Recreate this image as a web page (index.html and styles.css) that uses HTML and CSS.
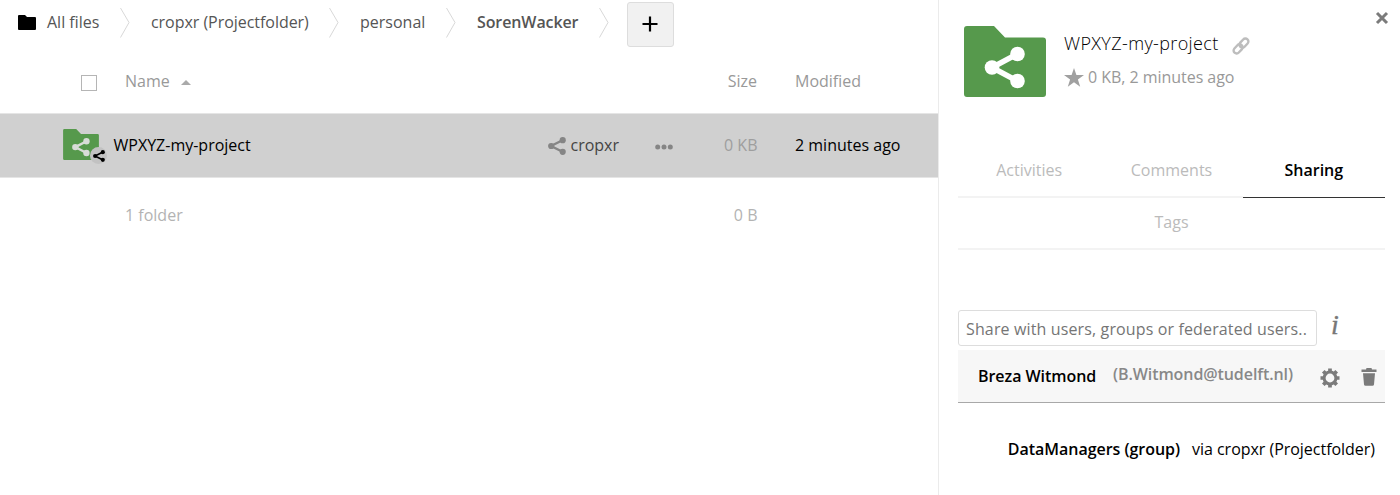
FILE: index.html
```html
<!DOCTYPE html>
<html lang="en">
<head>
<meta charset="utf-8">
<title>Files</title>
<link rel="stylesheet" href="styles.css">
</head>
<body>
<svg class="defs" width="0" height="0">
  <symbol id="share" viewBox="0 0 18 18"><path d="M15 3 3 9l12 6" fill="none" stroke="currentColor" stroke-width="2.400"/><circle cx="14.700" cy="3.200" r="3.100" fill="currentColor"/><circle cx="3.200" cy="9" r="3.100" fill="currentColor"/><circle cx="14.700" cy="14.800" r="3.100" fill="currentColor"/></symbol>
  <symbol id="folder" viewBox="0 0 82 71"><path d="M3 0h27l11 11.500h38q3 0 3 3V68q0 3-3 3H3q-3 0-3-3V3q0-3 3-3z" fill="#56994c"/><path d="M53.500 28 28 41.500 53.500 55" fill="none" stroke="currentColor" stroke-width="5.500"/><circle cx="53.500" cy="28" r="7.300" fill="currentColor"/><circle cx="28" cy="41.500" r="7.300" fill="currentColor"/><circle cx="53.500" cy="55" r="7.300" fill="currentColor"/></symbol>
  <symbol id="sep" viewBox="0 0 10 32"><path d="M.5 1 9 15.500.5 30.500" fill="none" stroke="#d8d8d8"/></symbol>
</svg>
<div class="app">
  <main class="files">
    <nav class="crumbs">
      <svg class="home" width="18" height="16"><path d="M0 1q0-1 1-1h6l2 2h8q1 0 1 1v11q0 1-1 1H1q-1 0-1-1z"/></svg>
      <span class="crumb c1">All files</span><svg class="sep"><use href="#sep"/></svg>
      <span class="crumb c2">cropxr (Projectfolder)</span><svg class="sep"><use href="#sep"/></svg>
      <span class="crumb c3">personal</span><svg class="sep"><use href="#sep"/></svg>
      <span class="crumb c4">SorenWacker</span><svg class="sep"><use href="#sep"/></svg>
      <button class="add" aria-label="New"><svg width="16" height="16"><path d="M8 .5v15M.5 8h15" stroke="#000" stroke-width="2.200"/></svg></button>
    </nav>
    <div class="row head">
      <span class="check"></span>
      <span class="label">Name<svg class="sort" width="10" height="5"><path d="M0 5 5 0l5 5z" fill="#aaa"/></svg></span>
      <span class="size">Size</span><span class="date">Modified</span>
    </div>
    <div class="row item">
      <span class="thumb"><svg class="thumb-folder" width="36" height="31"><use href="#folder"/></svg><span class="badge"><svg width="12" height="12"><use href="#share"/></svg></span></span>
      <span class="name">WPXYZ-my-project</span>
      <span class="owner"><svg width="18" height="18"><use href="#share"/></svg>cropxr</span>
      <svg class="more" width="18" height="6"><circle cx="2.700" cy="3" r="2.500"/><circle cx="9" cy="3" r="2.500"/><circle cx="15.300" cy="3" r="2.500"/></svg>
      <span class="size">0 KB</span><span class="date">2 minutes ago</span>
    </div>
    <div class="row summary"><span class="label">1 folder</span><span class="size">0 B</span><span class="date"></span></div>
  </main>
  <aside class="details">
    <button class="close" aria-label="Close"><svg width="14" height="14"><path d="m2 2 10 10M12 2 2 12" stroke="#7b7b7b" stroke-width="3"/></svg></button>
    <header class="info">
      <svg class="big" width="82" height="71"><use href="#folder"/></svg>
      <div>
        <div class="title"><span>WPXYZ-my-project</span><svg width="18" height="18" viewBox="0 0 18 18" fill="none" stroke="#bdbdbd" stroke-width="2.400"><rect x="-5.200" y="-3" width="10.400" height="6" rx="3" transform="translate(11.900 6.100) rotate(-47)"/><rect x="-5.200" y="-3" width="10.400" height="6" rx="3" transform="translate(6.100 11.900) rotate(-47)"/></svg></div>
        <div class="meta"><svg width="20" height="19" viewBox="0 0 20 19"><path d="m10 0 2.400 7H20l-6.100 4.400 2.300 7.400L10 14.300l-6.200 4.500 2.300-7.400L0 7h7.600z" fill="#a0a0a0"/></svg><span>0 KB, 2 minutes ago</span></div>
      </div>
    </header>
    <nav class="tabs"><span class="tab">Activities</span><span class="tab">Comments</span><span class="tab on">Sharing</span><span class="tab wide">Tags</span></nav>
    <div class="search"><span class="field">Share with users, groups or federated users..</span><span class="hint">i</span></div>
    <div class="person">
      <b class="who">Breza Witmond</b><b class="mail">(B.Witmond@tudelft.nl)</b>
      <svg class="gear" width="20" height="20" viewBox="-10 -10 20 20"><circle r="5.900" fill="none" stroke="#7b7b7b" stroke-width="3"/><g stroke="#7b7b7b" stroke-width="3.700"><path d="M0-9.500v3M0 9.500v-3M-9.500 0h3M9.500 0h-3"/><path d="M0-9.500v3M0 9.500v-3M-9.500 0h3M9.500 0h-3" transform="rotate(45)"/></g></svg>
      <svg class="bin" width="16" height="18" viewBox="0 0 16 18" fill="#7b7b7b"><path d="M.5 1.500H5L5.500 0h5l.5 1.500h4.500V4H.5zM2 5.200h12l-1 11.300q-.2 1.300-1.500 1.300h-7Q3.200 17.800 3 16.500z"/></svg>
    </div>
    <div class="group"><b>DataManagers (group)</b><span>via cropxr (Projectfolder)</span></div>
  </aside>
</div>
</body>
</html>
```
FILE: styles.css
```css
* { box-sizing: border-box; }
body { margin: 0; background: #fff; font: 16px/24px "Open Sans", sans-serif; color: #000; overflow: hidden; }
.defs { display: none; }
svg { display: block; flex: none; }
b { font-weight: 600; }
button { padding: 0; font: inherit; }
.app { display: flex; height: 495px; }
.files { width: 938px; flex: none; }
.crumbs { display: flex; height: 49px; padding-left: 18px; color: #555; white-space: nowrap; }
.home { margin: 15px 11px 0 0; }
.crumb { padding-top: 10px; flex: none; }
.c1 { width: 73px; }
.c2 { width: 178px; letter-spacing: -.04px; }
.c3 { width: 86px; }
.c4 { width: 122px; font-weight: 600; letter-spacing: -.1px; }
.sep { width: 10px; height: 32px; margin: 7px 21px 0 0; }
.sep:nth-of-type(5) { margin-right: 18px; }
.add { display: flex; align-items: center; justify-content: center; width: 47px; height: 45px; margin-top: 2px; padding: 0 2px 2px 0; border: 1px solid #ddd; border-radius: 3px; background: #f1f1f1; }
.row { display: flex; align-items: center; }
.head { height: 64px; color: #999; }
.check { width: 16px; height: 16px; margin: 4px 28px 0 81px; border: 1px solid #b5b5b5; }
.label { display: flex; align-items: center; flex: 1; }
.sort { margin: 2px 0 0 11px; }
.size { width: 60px; text-align: right; }
.date { width: 143px; margin-left: 37px; }
.head .size { margin-right: 1px; }
.item { height: 65px; padding-bottom: 2px; background: #d0d0d0; border: solid #e5e5e5; border-width: 1px 0; }
.thumb { display: block; position: relative; width: 50.500px; height: 36px; margin-left: 63px; padding-top: 2px; color: #d8dcd7; }
.badge { position: absolute; left: 27px; top: 20px; width: 17px; height: 17px; padding: 3px 2px 2px 3px; border-radius: 50%; background: #c2c2c2; color: #000; }
.name { flex: 1; }
.owner { display: flex; align-items: center; gap: 5px; width: 107px; color: #444; }
.owner svg { color: #858585; margin-top: 3px; }
.more { fill: #858585; margin-top: 4px; }
.item .size { width: 85px; color: #9e9e9e; }
.item .date, .summary .date { margin-left: 37.500px; }
.summary { height: 74px; padding-left: 125px; color: #b3b3b3; }
.details { position: relative; width: 462px; padding: 25px 15px 0 19px; border-left: 1px solid #ebebeb; }
.close { position: absolute; right: 11px; top: 11px; border: 0; background: none; }
.info { display: flex; height: 119px; padding-left: 5px; gap: 19px; }
.big { color: #fff; margin: .5px -.5px 0 .5px; }
.title { display: flex; gap: 13px; height: 40px; padding-top: 6px; font-size: 18px; font-weight: 300; letter-spacing: .37px; white-space: nowrap; }
.title svg { margin-top: 6px; }
.meta { display: flex; gap: 4px; color: #999; letter-spacing: -.04px; white-space: nowrap; }
.meta svg { margin-top: 3px; }
.tabs { display: grid; grid-template-columns: repeat(3, 1fr); color: #bbb; text-align: center; }
.tab { height: 52px; padding-top: 14px; border-bottom: 2px solid #f3f3f3; }
.tab:nth-child(-n+3) { height: 54px; }
.on { color: #000; font-weight: 600; border-bottom: 1px solid #333; }
.wide { grid-column: 1 / -1; padding-top: 12px; }
.search { display: flex; padding-top: 60px; }
.field { width: 359px; height: 36px; padding: 6px 7px; border: 1px solid #ddd; border-radius: 3px; color: #757575; letter-spacing: .135px; white-space: nowrap; }
.hint { margin-left: 14px; padding-top: 3px; font: italic 28px/24px "Liberation Serif", serif; color: #777; -webkit-text-stroke: .4px #777; }
.person { display: flex; height: 53px; margin-top: 4px; padding-left: 20px; background: #f7f7f7; border-bottom: 1px solid #a8a8a8; white-space: nowrap; }
.who { width: 135px; padding-top: 14px; letter-spacing: -.05px; }
.mail { width: 207px; padding-top: 12px; color: #888; letter-spacing: -.08px; }
.gear { margin-top: 18px; }
.bin { margin: 18px 0 0 21px; }
.group { display: flex; justify-content: flex-end; gap: 12px; padding: 34px 10px 0 0; letter-spacing: -.03px; white-space: nowrap; }
```
